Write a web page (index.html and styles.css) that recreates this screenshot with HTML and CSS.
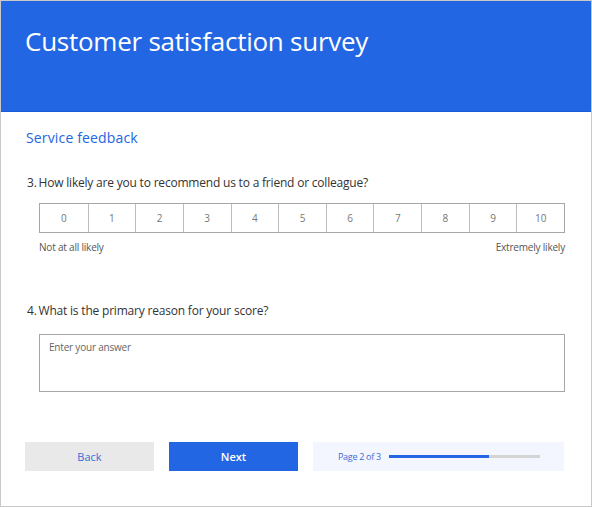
FILE: index.html
```html
<!DOCTYPE html>
<html>
<head>
<meta charset="utf-8">
<link rel="stylesheet" href="styles.css">
</head>
<body>
<div class="frame">
  <header class="header">
    <h1 class="title">Customer satisfaction survey</h1>
  </header>
  <main class="content">
    <h2 class="section">Service feedback</h2>
    <div class="question">
      <div class="qtext"><span class="qnum">3.</span> How likely are you to recommend us to a friend or colleague?</div>
      <div class="scale">
        <div class="cell">0</div><div class="cell">1</div><div class="cell">2</div><div class="cell">3</div><div class="cell">4</div><div class="cell">5</div><div class="cell">6</div><div class="cell">7</div><div class="cell">8</div><div class="cell">9</div><div class="cell">10</div>
      </div>
      <div class="labels"><span>Not at all likely</span><span>Extremely likely</span></div>
    </div>
    <div class="question q4">
      <div class="qtext"><span class="qnum">4.</span> What is the primary reason for your score?</div>
      <div class="answer">Enter your answer</div>
    </div>
    <div class="footer">
      <button class="btn back">Back</button>
      <button class="btn next">Next</button>
      <div class="progress">
        <span class="ptext">Page 2 of 3</span>
        <div class="track"><div class="fill" style="width:66.5%"></div></div>
      </div>
    </div>
  </main>
</div>
</body>
</html>
```
FILE: styles.css
```css
* { box-sizing: border-box; }
html, body { margin: 0; padding: 0; background: #fff; }
body { font-family: "Open Sans", "Noto Sans", sans-serif; color: #333; }
.frame {
  width: 592px;
  height: 507px;
  border: 1px solid #c9c9c9;
  display: flex;
  flex-direction: column;
}
.header {
  height: 111px;
  background: #2266e3;
  border-bottom: 1px solid #1a5bd6;
}
.title {
  margin: 0;
  padding: 20px 0 0 24px;
  font-weight: 400;
  font-size: 26px;
  line-height: 40px;
  color: #fff;
  letter-spacing: -0.25px;
}
.content {
  padding: 15px 26px 0 25px;
  display: flex;
  flex-direction: column;
}
.section {
  margin: 0;
  font-weight: 400;
  font-size: 14px;
  line-height: 22px;
  color: #2266e3;
  letter-spacing: 0.15px;
}
.question { margin-top: 25px; }
.qtext {
  font-size: 12px;
  line-height: 18px;
  color: #333;
  margin-left: 1px;
  letter-spacing: -0.2px;
}
.qnum { margin-right: -1px; }
.scale {
  margin: 11px 0 0 13px;
  width: 526px;
  height: 30px;
  display: grid;
  grid-template-columns: repeat(11, 1fr);
  border: 1px solid #a6a6a6;
}
.cell {
  border-left: 1px solid #bdbdbd;
  font-size: 10px;
  color: #777;
  display: flex;
  align-items: center;
  justify-content: center;
}
.cell:first-child { border-left: none; }
.labels {
  margin: 6px 0 0 13px;
  width: 526px;
  display: flex;
  justify-content: space-between;
  font-size: 10px;
  line-height: 16px;
  color: #555;
  letter-spacing: -0.2px;
}
.q4 { margin-top: 47px; }
.answer {
  margin: 14px 0 0 13px;
  width: 526px;
  height: 58px;
  border: 1px solid #a6a6a6;
  padding: 5px 9px;
  font-size: 10px;
  line-height: 14px;
  color: #666;
  letter-spacing: -0.2px;
}
.footer {
  margin: 50px 0 0 -1px;
  display: flex;
  gap: 15px;
  height: 29px;
}
.btn {
  width: 129px;
  height: 29px;
  border: none;
  font-family: inherit;
  font-size: 11px;
  padding: 0;
}
.back { background: #e9e9e9; color: #3a6bd8; }
.next { background: #2266e3; color: #fff; font-weight: 600; }
.progress {
  width: 251px;
  background: #f3f6fe;
  display: flex;
  align-items: center;
  padding-left: 25px;
}
.ptext {
  font-size: 9px;
  color: #3a6bd8;
  letter-spacing: -0.3px;
  margin-right: 8px;
}
.track {
  width: 151px;
  height: 3px;
  background: #d4d4d4;
}
.fill { height: 3px; background: #2266e3; }
```
